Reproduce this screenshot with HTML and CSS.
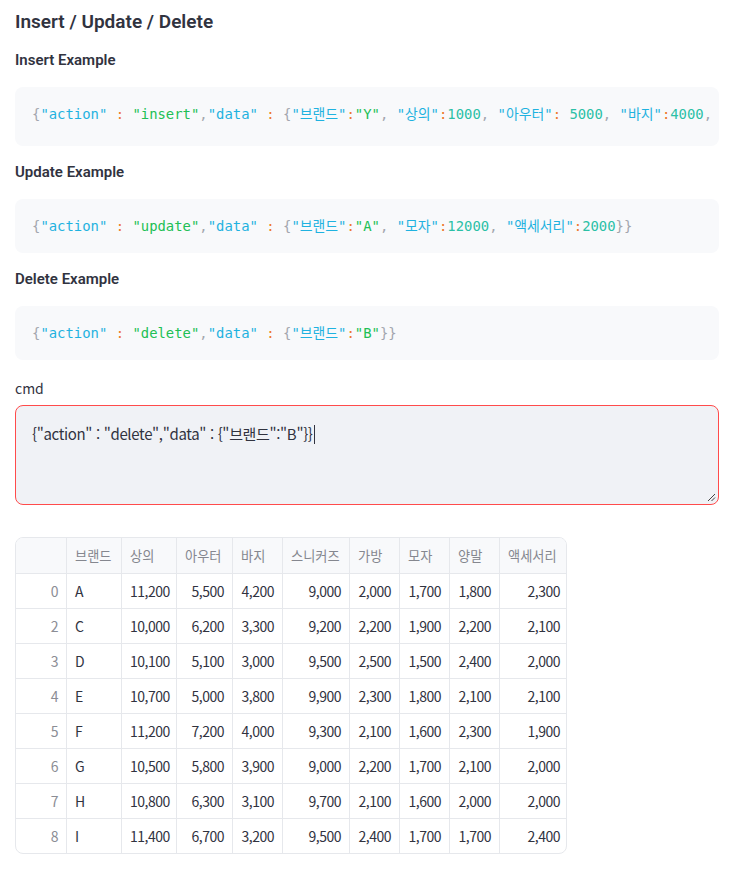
FILE: index.html
```html
<!DOCTYPE html>
<html lang="ko">
<head>
<meta charset="utf-8">
<title>Insert / Update / Delete</title>
<link rel="stylesheet" href="styles.css">
</head>
<body>
<main class="page">
  <h2 class="title">Insert / Update / Delete</h2>

  <h4 class="label">Insert Example</h4>
  <pre class="code code-wide"><span class="p">{</span><span class="k">"action"</span> <span class="o">:</span> <span class="s">"insert"</span><span class="p">,</span><span class="k">"data"</span> <span class="o">:</span> <span class="p">{</span><span class="k">"브랜드"</span><span class="o">:</span><span class="s">"Y"</span><span class="p">,</span> <span class="k">"상의"</span><span class="o">:</span><span class="n">1000</span><span class="p">,</span> <span class="k">"아우터"</span><span class="o">:</span> <span class="n">5000</span><span class="p">,</span> <span class="k">"바지"</span><span class="o">:</span><span class="n">4000</span><span class="p">,</span></pre>

  <h4 class="label">Update Example</h4>
  <pre class="code"><span class="p">{</span><span class="k">"action"</span> <span class="o">:</span> <span class="s">"update"</span><span class="p">,</span><span class="k">"data"</span> <span class="o">:</span> <span class="p">{</span><span class="k">"브랜드"</span><span class="o">:</span><span class="s">"A"</span><span class="p">,</span> <span class="k">"모자"</span><span class="o">:</span><span class="n">12000</span><span class="p">,</span> <span class="k">"액세서리"</span><span class="o">:</span><span class="n">2000</span><span class="p">}}</span></pre>

  <h4 class="label">Delete Example</h4>
  <pre class="code"><span class="p">{</span><span class="k">"action"</span> <span class="o">:</span> <span class="s">"delete"</span><span class="p">,</span><span class="k">"data"</span> <span class="o">:</span> <span class="p">{</span><span class="k">"브랜드"</span><span class="o">:</span><span class="s">"B"</span><span class="p">}}</span></pre>

  <div class="field-label">cmd</div>
  <div class="textarea">
    <span class="ta-text">{"action" : "delete","data" : {"브랜드":"B"}}</span><span class="caret"></span>
    <svg class="grip" width="9" height="9" viewBox="0 0 9 9"><path d="M8 1 L1 8 M8 4.5 L4.5 8" stroke="#444" stroke-width="1" fill="none"/></svg>
  </div>

  <div class="table-wrap">
    <table class="df">
      <colgroup>
        <col style="width:51px"><col style="width:55px"><col style="width:55px"><col style="width:56px"><col style="width:50px"><col style="width:67px"><col style="width:50px"><col style="width:50px"><col style="width:50px"><col style="width:68px">
      </colgroup>
      <thead>
        <tr><th></th><th>브랜드</th><th>상의</th><th>아우터</th><th>바지</th><th>스니커즈</th><th>가방</th><th>모자</th><th>양말</th><th>액세서리</th></tr>
      </thead>
      <tbody>
        <tr><td class="idx">0</td><td class="txt">A</td><td>11,200</td><td>5,500</td><td>4,200</td><td>9,000</td><td>2,000</td><td>1,700</td><td>1,800</td><td>2,300</td></tr>
        <tr><td class="idx">2</td><td class="txt">C</td><td>10,000</td><td>6,200</td><td>3,300</td><td>9,200</td><td>2,200</td><td>1,900</td><td>2,200</td><td>2,100</td></tr>
        <tr><td class="idx">3</td><td class="txt">D</td><td>10,100</td><td>5,100</td><td>3,000</td><td>9,500</td><td>2,500</td><td>1,500</td><td>2,400</td><td>2,000</td></tr>
        <tr><td class="idx">4</td><td class="txt">E</td><td>10,700</td><td>5,000</td><td>3,800</td><td>9,900</td><td>2,300</td><td>1,800</td><td>2,100</td><td>2,100</td></tr>
        <tr><td class="idx">5</td><td class="txt">F</td><td>11,200</td><td>7,200</td><td>4,000</td><td>9,300</td><td>2,100</td><td>1,600</td><td>2,300</td><td>1,900</td></tr>
        <tr><td class="idx">6</td><td class="txt">G</td><td>10,500</td><td>5,800</td><td>3,900</td><td>9,000</td><td>2,200</td><td>1,700</td><td>2,100</td><td>2,000</td></tr>
        <tr><td class="idx">7</td><td class="txt">H</td><td>10,800</td><td>6,300</td><td>3,100</td><td>9,700</td><td>2,100</td><td>1,600</td><td>2,000</td><td>2,000</td></tr>
        <tr><td class="idx">8</td><td class="txt">I</td><td>11,400</td><td>6,700</td><td>3,200</td><td>9,500</td><td>2,400</td><td>1,700</td><td>1,700</td><td>2,400</td></tr>
      </tbody>
    </table>
  </div>
</main>
</body>
</html>
```

FILE: styles.css
```css
html, body {
  margin: 0;
  padding: 0;
  background: #ffffff;
}

body {
  font-family: "Noto Sans CJK KR", "Noto Sans", sans-serif;
  color: #31333f;
}

.page {
  width: 704px;
  margin: 0 20px 0 15px;
  padding-top: 10px;
  padding-bottom: 19px;
}

.title {
  margin: 0;
  font-family: Roboto, "Noto Sans CJK KR", sans-serif;
  font-size: 19px;
  line-height: 24px;
  font-weight: 600;
  color: #31333f;
}

.label {
  margin: 15px 0 16px;
  font-family: Roboto, "Noto Sans CJK KR", sans-serif;
  font-size: 15px;
  line-height: 22px;
  font-weight: 600;
  color: #31333f;
}

.code {
  margin: 0;
  background: #f8f9fb;
  border-radius: 8px;
  padding: 16px 16px 16px 17px;
  font-family: "DejaVu Sans Mono", "Noto Sans CJK KR", monospace;
  font-size: 13.9px;
  line-height: 22px;
  white-space: pre;
  overflow: hidden;
}

.code-wide {
  padding-bottom: 21px;
}

.code .p { color: #a3a6ae; }
.code .k { color: #1fb2e0; }
.code .o { color: #ee7a2f; }
.code .s { color: #21bf55; }
.code .n { color: #2bc0a6; }

.field-label {
  margin-top: 18px;
  font-size: 14px;
  line-height: 20px;
  color: #31333f;
}

.textarea {
  position: relative;
  margin-top: 7px;
  height: 100px;
  box-sizing: border-box;
  width: 704px;
  border: 1px solid #ff4b4b;
  border-radius: 8px;
  background: #f0f2f6;
  padding: 16px 16px 0 16px;
  font-size: 15px;
  letter-spacing: -0.35px;
  line-height: 24px;
  font-weight: 400;
  color: #31333f;
  display: flex;
  align-items: flex-start;
}

.ta-text {
  white-space: pre;
}

.caret {
  display: inline-block;
  width: 1px;
  height: 19px;
  margin-top: 3px;
  margin-left: 1px;
  background: #31333f;
}

.grip {
  position: absolute;
  right: 2px;
  bottom: 2px;
}

.table-wrap {
  margin-top: 32px;
  width: 550px;
  border: 1px solid #e6e8ec;
  border-radius: 8px;
  overflow: hidden;
}

.df {
  border-collapse: separate;
  border-spacing: 0;
  table-layout: fixed;
  width: 551px;
  font-size: 14px;
  color: #31333f;
}

.df th, .df td {
  border-right: 1px solid #e6e8ec;
  border-bottom: 1px solid #e6e8ec;
  padding: 0 8px;
  white-space: nowrap;
  overflow: hidden;
}

.df th:last-child, .df td:last-child {
  border-right: none;
}

.df tbody tr:last-child td {
  border-bottom: none;
}

.df th {
  height: 35px;
  background: #f8f9fb;
  font-weight: 400;
  text-align: left;
  color: #85878f;
  font-size: 13.2px;
}

.df td {
  height: 34px;
  text-align: right;
  letter-spacing: -0.5px;
}

.df td.idx {
  color: #8b8d95;
}

.df td.txt {
  text-align: left;
}
```
